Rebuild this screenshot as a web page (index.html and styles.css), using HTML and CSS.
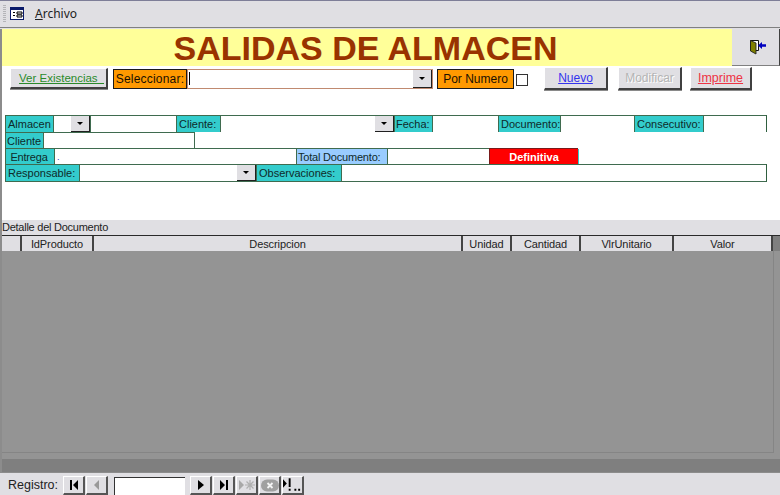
FILE: index.html
```html
<!DOCTYPE html>
<html lang="es">
<head>
<meta charset="utf-8">
<title>Salidas de Almacen</title>
<link rel="stylesheet" href="styles.css">
</head>
<body>
<div class="app">
  <header class="menubar">
    <span class="grip"></span>
    <svg class="form-icon" width="14" height="13" viewBox="0 0 14 13">
      <rect x="0.5" y="0.5" width="13" height="12" fill="#fff" stroke="#0a1a6a"/>
      <rect x="1" y="1" width="12" height="2" fill="#0a1a6a"/>
      <path d="M3 5h2v1H3zM3 8h2v1H3z" fill="#000"/>
      <path d="M7 5h5v2H7zM7 8h5v2H7z" fill="none" stroke="#000" stroke-width="1"/>
    </svg>
    <span class="menu-item"><u>A</u>rchivo</span>
  </header>

  <main class="form">
    <div class="title-row">
      <h1 class="title">SALIDAS DE ALMACEN</h1>
      <div class="exit-btn">
        <svg width="20" height="16" viewBox="0 0 20 16">
          <path d="M4.500 1.500h8v10h-8z" fill="#fff" stroke="#111"/>
          <path d="M4.500 1.500L10 4v11l-5.500-3z" fill="#808000" stroke="#222" stroke-width="0.9"/>
          <path d="M12 6.500L16 3v2.300h4v2.400h-4V10z" fill="#0000c0"/>
        </svg>
      </div>
    </div>

    <div class="toolbar">
      <div class="btn btn-ver"><u class="ver">Ver Existencias &nbsp;</u></div>
      <div class="tag tag-sel">Seleccionar:</div>
      <div class="combo">
        <span class="caret"></span>
        <span class="drop"><i class="arrow"></i></span>
      </div>
      <div class="tag tag-num">Por Numero</div>
      <span class="check"></span>
      <div class="btn btn-nuevo"><u class="blue">Nuevo</u></div>
      <div class="btn btn-mod"><span class="off">Modificar</span></div>
      <div class="btn btn-imp"><u class="red">Imprime</u></div>
    </div>

    <section class="fields">
      <div class="row r1">
        <div class="cell lab w48">Almacen</div>
        <div class="cell w37 sel"><span class="drop"><i class="arrow"></i></span></div>
        <div class="cell w86"></div>
        <div class="cell lab w44">Cliente:</div>
        <div class="cell w174 sel"><span class="drop"><i class="arrow"></i></span></div>
        <div class="cell lab w38 tight-pad">Fecha:</div>
        <div class="cell w66"></div>
        <div class="cell lab w62">Documento:</div>
        <div class="cell w74"></div>
        <div class="cell lab w69">Consecutivo:</div>
        <div class="cell w64 last"></div>
      </div>
      <div class="row r2">
        <div class="cell lab w38 tight-pad">Cliente</div>
        <div class="cell w151"></div>
        <div class="cell open"></div>
      </div>
      <div class="row r3">
        <div class="cell lab w49 center">Entrega</div>
        <div class="cell w242 dot">.</div>
        <div class="cell lab blue-lab w91">Total Documento:</div>
        <div class="cell w102"></div>
        <div class="cell def w89">Definitiva</div>
        <div class="teal-end"></div>
      </div>
      <div class="row r4">
        <div class="cell lab w74">Responsable:</div>
        <div class="cell w177 sel"><span class="drop"><i class="arrow"></i></span></div>
        <div class="cell lab w85">Observaciones:</div>
        <div class="cell w426 last"></div>
      </div>
    </section>

    <div class="detail-label">Detalle del Documento</div>
    <div class="grid-head">
      <div class="hc h-sel"></div>
      <div class="hc h-id">IdProducto</div>
      <div class="hc h-desc">Descripcion</div>
      <div class="hc h-uni">Unidad</div>
      <div class="hc h-can">Cantidad</div>
      <div class="hc h-vlr">VlrUnitario</div>
      <div class="hc h-val">Valor</div>
      <div class="h-end"></div>
    </div>
    <div class="grid-body"><div class="grid-inset"></div></div>
    <div class="grid-foot"></div>
  </main>

  <footer class="nav">
    <span class="nav-label">Registro:</span>
    <span class="nb"><svg width="12" height="10" viewBox="0 0 12 10"><path d="M2 0h2v10H2zM10 0v10L5 5z" fill="#000"/></svg></span>
    <span class="nb"><svg width="12" height="10" viewBox="0 0 12 10"><path d="M8 0v10L3 5z" fill="#999"/></svg></span>
    <span class="nav-input"></span>
    <span class="nb"><svg width="12" height="10" viewBox="0 0 12 10"><path d="M3 0v10L9 5z" fill="#000"/></svg></span>
    <span class="nb"><svg width="12" height="10" viewBox="0 0 12 10"><path d="M2 0v10L7 5zM8 0h2v10H8z" fill="#000"/></svg></span>
    <span class="nb"><svg width="18" height="12" viewBox="0 0 18 12"><path d="M1 1v10l5-5z" fill="#a8a8a8"/><path d="M12 1v10M7 6h10M8.500 2.500l7 7M15.500 2.500l-7 7" stroke="#b0b0b0" stroke-width="1.200"/></svg></span>
    <span class="nb"><svg width="18" height="13" viewBox="0 0 18 13"><rect x="0" y="0.500" width="18" height="12" rx="6" fill="#a0a0a0"/><path d="M6.500 4l5 5M11.500 4l-5 5" stroke="#f4f4f4" stroke-width="1.800"/></svg></span>
    <span class="nb"><svg width="20" height="14" viewBox="0 0 20 14"><path d="M0 1v9l4-4.500z" fill="#000"/><path d="M6 0h2v9H6zM6 11h2v2H6zM12 11h2v2h-2zM16 11h2v2h-2z" fill="#000"/></svg></span>
  </footer>
</div>
</body>
</html>
```
FILE: styles.css
```css
* { box-sizing: border-box; }
html, body { margin: 0; padding: 0; }
body { background: #e0dfe3; font-family: "Liberation Sans", Arial, sans-serif; font-size: 11px; color: #111; }
.app { width: 780px; height: 495px; display: flex; flex-direction: column; overflow: hidden; border-top: 1px solid #7e7e98; }

.menubar { height: 27px; flex: none; display: flex; align-items: center; background: #e0dfe3; border-bottom: 1px solid #808080; padding: 0 0 1px 3px; }
.grip { width: 3px; height: 17px; background: repeating-linear-gradient(#b4b4b8 0 1px, #e0dfe3 1px 2px); }
.form-icon { margin-left: 4px; }
.menu-item { margin-left: 11px; font-family: "Noto Sans", sans-serif; font-size: 12px; color: #222; }

.form { flex: 1; display: flex; flex-direction: column; background: #fff; border-left: 2px solid #8c8c8c; min-height: 0; margin-top: 1px; }

.title-row { height: 37px; flex: none; display: flex; }
.title { flex: 1; margin: 0; background: #ffff99; color: #993300; font-size: 34px; line-height: 39px; font-weight: bold; text-align: center; padding-right: 3px; overflow: hidden; }
.exit-btn { width: 48px; display: flex; align-items: center; justify-content: center; background: #e0dfe3; border-right: 1px solid #404040; border-bottom: 1px solid #808080; }

.toolbar { height: 39px; flex: none; display: flex; align-items: flex-start; padding-left: 8px; font-size: 12px; }
.btn { display: flex; align-items: center; justify-content: center; background: #e0dfe3; border-style: solid; border-width: 1px 2px 2px 1px; border-color: #fff #404040 #404040 #fff; box-shadow: 0 1px 0 #8a8a8a; }
.btn-ver { width: 98px; height: 21px; margin-top: 2px; justify-content: flex-start; padding-left: 8px; }
.btn-nuevo { width: 64px; height: 23px; margin: 1px 0 0 16px; }
.btn-mod { width: 64px; height: 23px; margin: 1px 0 0 10px; }
.btn-imp { width: 62px; height: 23px; margin: 1px 0 0 8px; }
.ver { color: #2a8a2a; font-size: 11.5px; }
.blue { color: #3333ee; }
.red { color: #ee3344; font-size: 12.500px; }
.off { color: #b4b4b4; text-shadow: 1px 1px 0 #fff; }

.tag { height: 20px; margin-top: 3px; background: #ff9900; border: 1px solid #1a1a1a; display: flex; align-items: center; justify-content: center; color: #1a1000; }
.tag-sel { width: 74px; margin-left: 5px; letter-spacing: 0.2px; }
.tag-num { width: 77px; margin-left: 4px; }
.combo { width: 246px; height: 20px; margin-top: 3px; background: #fff; border: 1px solid #c08a70; display: flex; justify-content: space-between; align-items: stretch; padding-left: 1px; }
.caret { width: 1px; height: 13px; margin-top: 2px; background: #000; }
.check { width: 12px; height: 12px; margin: 8px 0 0 2px; background: #fff; border: 1px solid #333; }

.drop { width: 19px; background: #e0dfe3; display: flex; align-items: center; justify-content: center; border-right: 1px solid #202020; border-bottom: 1px solid #202020; }
.arrow { width: 0; height: 0; border: 3px solid transparent; border-top: 3px solid #000; border-bottom: 0; }

.fields { height: 115px; flex: none; padding: 10px 0 0 3px; }
.row { display: flex; }
.r1 { height: 18px; }
.r2, .r3 { height: 17px; margin-top: -1px; }
.r4 { height: 18px; margin-top: -1px; }
.cell { height: 100%; border: 1px solid #3f6b4f; border-right: 0; display: flex; align-items: center; white-space: nowrap; overflow: hidden; background: #fff; }
.cell.last { border-right: 1px solid #2f5f3f; }
.lab { background: #33cccc; padding-left: 2px; color: #0f2a2a; }
.tight-pad { padding-left: 1px; }
.center { justify-content: center; padding: 0 2px 0 0; letter-spacing: -0.2px; }
.blue-lab { background: #99ccff; padding-left: 1px; letter-spacing: -0.2px; }
.sel { justify-content: flex-end; align-items: stretch; }
.dot { padding-left: 2px; color: #3333cc; font-size: 9px; }
.open { flex: 1; border-bottom: 0; border-top: 0; }
.def { background: #ff0000; color: #fff; font-weight: bold; justify-content: center; border-color: #7a1a1a; }
.teal-end { width: 1px; margin-top: 1px; background: #33cccc; }
.w37 { width: 37px; } .w38 { width: 38px; } .w44 { width: 44px; } .w48 { width: 48px; } .w49 { width: 49px; }
.w62 { width: 62px; } .w64 { width: 64px; } .w66 { width: 66px; } .w69 { width: 69px; } .w74 { width: 74px; }
.w85 { width: 85px; } .w86 { width: 86px; } .w89 { width: 89px; } .w91 { width: 91px; } .w102 { width: 102px; }
.w151 { width: 151px; } .w174 { width: 174px; } .w177 { width: 177px; } .w242 { width: 242px; } .w426 { width: 426px; }

.detail-label { height: 15px; flex: none; background: #e0dfe3; color: #222; line-height: 15px; letter-spacing: -0.25px; }
.grid-head { height: 16px; flex: none; display: flex; background: #e0dfe3; border-top: 1px solid #2a2a2a; }
.hc { height: 100%; border-right: 2px solid #444; text-align: center; line-height: 17px; color: #222; letter-spacing: -0.1px; }
.h-sel { width: 20px; } .h-id { width: 72px; } .h-desc { width: 369px; } .h-uni { width: 49px; }
.h-can { width: 69px; } .h-vlr { width: 93px; } .h-val { width: 99px; }
.h-end { flex: 1; background: #7f7f7f; }
.grid-body { flex: 1; min-height: 0; background: #949494; padding: 0 6px 6px 0; display: flex; }
.grid-inset { flex: 1; border-right: 1px solid #858585; border-bottom: 1px solid #858585; }
.grid-foot { height: 14px; flex: none; background: #7f7f7f; border-bottom: 1px solid #8c8c8c; }

.nav { height: 22px; flex: none; display: flex; align-items: stretch; background: #e0dfe3; padding: 3px 0 0 8px; }
.nav-label { width: 55px; font-size: 12.500px; line-height: 18px; color: #222; }
.nb { width: 22px; margin-right: 1px; display: flex; align-items: center; justify-content: center; border-style: solid; border-width: 1px 2px 2px 1px; border-color: #fff #555 #555 #fff; background: #e0dfe3; }
.nav-input { width: 71px; margin: 1px 5px 0 5px; background: #fff; border-style: solid; border-width: 1px 0 0 1px; border-color: #333; }
```
